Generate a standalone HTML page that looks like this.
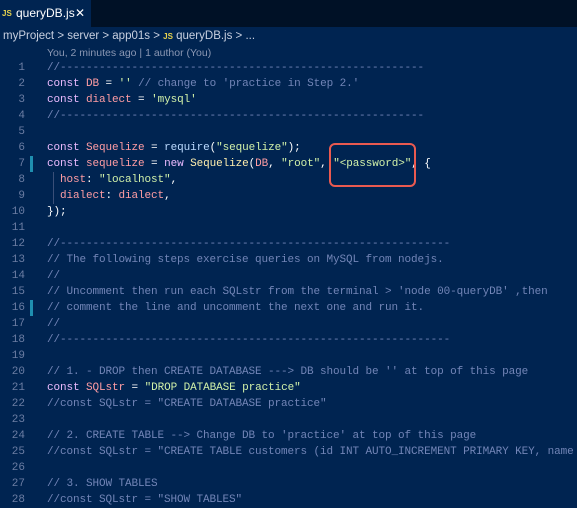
<!DOCTYPE html>
<html><head><meta charset="utf-8"><style>
*{margin:0;padding:0;box-sizing:border-box}
body{width:577px;height:499px;overflow:hidden;background:#002451;position:relative;font-family:"Liberation Sans",sans-serif}
.tabbar{position:absolute;left:0;top:0;width:577px;height:27px;background:#001126}
.tab{position:absolute;left:0;top:0;width:91px;height:27px;background:#002451;color:#fff;font-size:12px;line-height:27px;padding-left:16px;white-space:nowrap}
.js{color:#e8d44d;font-weight:bold;font-size:8px;position:absolute;left:2px;top:0}
.x{position:absolute;left:75px;top:0;font-size:12px}
.bc{position:absolute;left:3px;top:30px;color:#c8d0e0;font-size:11.5px;white-space:nowrap}
.blame{position:absolute;left:47px;top:47px;color:#8a97b3;font-size:10.5px;white-space:nowrap}
.code{position:absolute;left:0;top:60px;width:577px;font-family:"Liberation Mono",monospace;font-size:11px;letter-spacing:-0.1px}
.l{height:16px;line-height:16px;position:relative}
.n{position:absolute;right:552px;color:#6b7da3;letter-spacing:0}
.t{position:absolute;left:47px;color:#fff;white-space:pre}
.c{color:#7285b7}.k{color:#ebbbff}.v{color:#ff9da4}.s{color:#d1f1a9}.f{color:#bbdaff}.y{color:#ffeead}
.m{position:absolute;left:30px;top:0;width:3px;height:16px;background:#1f8fb0}
.g{position:absolute;left:53px;width:1px;height:16px;background:#3a4f78}
.box{position:absolute;left:329px;top:143px;width:87px;height:44px;border:2.5px solid #ea5a50;border-radius:6px}
</style></head><body>
<div class="tabbar"><div class="tab"><span class="js">JS</span>queryDB.js<span class="x">✕</span></div></div>
<div class="bc">myProject &gt; server &gt; app01s &gt; <span style="color:#e8d44d;font-weight:bold;font-size:8px">JS</span> queryDB.js &gt; ...</div>
<div class="blame">You, 2 minutes ago | 1 author (You)</div>
<div class="code"><div class="l"><span class="n">1</span><span class="t c">//--------------------------------------------------------</span></div><div class="l"><span class="n">2</span><span class="t"><span class="k">const</span> <span class="v">DB</span> = <span class="s">''</span> <span class="c">// change to 'practice in Step 2.'</span></span></div><div class="l"><span class="n">3</span><span class="t"><span class="k">const</span> <span class="v">dialect</span> = <span class="s">'mysql'</span></span></div><div class="l"><span class="n">4</span><span class="t c">//--------------------------------------------------------</span></div><div class="l"><span class="n">5</span></div><div class="l"><span class="n">6</span><span class="t"><span class="k">const</span> <span class="v">Sequelize</span> = <span class="f">require</span>(<span class="s">"sequelize"</span>);</span></div><div class="l"><span class="m"></span><span class="n">7</span><span class="t"><span class="k">const</span> <span class="v">sequelize</span> = <span class="k">new</span> <span class="y">Sequelize</span>(<span class="v">DB</span>, <span class="s">"root"</span>, <span class="s">"&lt;password&gt;"</span>, {</span></div><div class="l"><span class="g"></span><span class="n">8</span><span class="t">  <span class="v">host</span>: <span class="s">"localhost"</span>,</span></div><div class="l"><span class="g"></span><span class="n">9</span><span class="t">  <span class="v">dialect</span>: <span class="v">dialect</span>,</span></div><div class="l"><span class="n">10</span><span class="t">});</span></div><div class="l"><span class="n">11</span></div><div class="l"><span class="n">12</span><span class="t c">//------------------------------------------------------------</span></div><div class="l"><span class="n">13</span><span class="t c">// The following steps exercise queries on MySQL from nodejs.</span></div><div class="l"><span class="n">14</span><span class="t c">//</span></div><div class="l"><span class="n">15</span><span class="t c">// Uncomment then run each SQLstr from the terminal &gt; 'node 00-queryDB' ,then</span></div><div class="l"><span class="m"></span><span class="n">16</span><span class="t c">// comment the line and uncomment the next one and run it.</span></div><div class="l"><span class="n">17</span><span class="t c">//</span></div><div class="l"><span class="n">18</span><span class="t c">//------------------------------------------------------------</span></div><div class="l"><span class="n">19</span></div><div class="l"><span class="n">20</span><span class="t c">// 1. - DROP then CREATE DATABASE ---&gt; DB should be '' at top of this page</span></div><div class="l"><span class="n">21</span><span class="t"><span class="k">const</span> <span class="v">SQLstr</span> = <span class="s">"DROP DATABASE practice"</span></span></div><div class="l"><span class="n">22</span><span class="t c">//const SQLstr = "CREATE DATABASE practice"</span></div><div class="l"><span class="n">23</span></div><div class="l"><span class="n">24</span><span class="t c">// 2. CREATE TABLE --&gt; Change DB to 'practice' at top of this page</span></div><div class="l"><span class="n">25</span><span class="t c">//const SQLstr = "CREATE TABLE customers (id INT AUTO_INCREMENT PRIMARY KEY, name</span></div><div class="l"><span class="n">26</span></div><div class="l"><span class="n">27</span><span class="t c">// 3. SHOW TABLES</span></div><div class="l"><span class="n">28</span><span class="t c">//const SQLstr = "SHOW TABLES"</span></div></div>
<div class="box"></div>
</body></html>
